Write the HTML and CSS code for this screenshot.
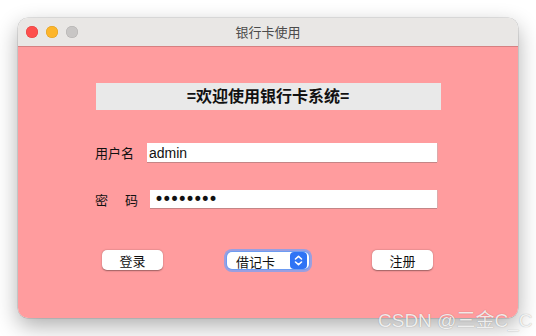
FILE: index.html
```html
<!DOCTYPE html>
<html lang="zh-CN">
<head>
    <meta charset="UTF-8">
    <title>银行卡使用</title>
    <link rel="stylesheet" href="styles.css">
</head>
<body>
<div class="window">
    <div class="titlebar">
        <div class="lights">
            <span class="close"></span>
            <span class="min"></span>
            <span class="max"></span>
        </div>
        <div class="title">银行卡使用</div>
    </div>
    <div class="content">
        <div class="banner">=欢迎使用银行卡系统=</div>
        <div class="row user">
            <span class="label">用户名</span>
            <input type="text" value="admin">
        </div>
        <div class="row pwd">
            <span class="label">密&emsp;码</span>
            <input type="password" value="12345678">
        </div>
        <div class="actions">
            <button class="btn">登录</button>
            <span class="select">
                <select>
                    <option>借记卡</option>
                    <option>信用卡</option>
                </select>
                <span class="stepper">
                    <svg width="17" height="17" viewBox="0 0 17 17">
                        <path d="M5.5 7 L8.5 4.3 L11.5 7 M5.5 10 L8.5 12.7 L11.5 10" fill="none" stroke="#fff" stroke-width="1.6" stroke-linecap="round" stroke-linejoin="round"/>
                    </svg>
                </span>
            </span>
            <button class="btn reg">注册</button>
        </div>
    </div>
</div>
<div class="mark">CSDN @三金C_C</div>
</body>
</html>
```

FILE: styles.css
```css
*{
    margin:0;
    padding:0;
    box-sizing:border-box;
}
html,body{
    width:536px;
    height:336px;
    overflow:hidden;
    background:#fff;
    font-family:"Liberation Sans","Noto Sans CJK SC",sans-serif;
}
.window{
    width:500px;
    height:300px;
    margin:18px 0 0 18px;
    border-radius:10px;
    overflow:hidden;
    box-shadow:0 8px 22px rgba(0,0,0,.32),0 0 0 .5px rgba(0,0,0,.18);
}
.titlebar{
    position:relative;
    height:29px;
    background-color:#e9e7e5;
    border-bottom:1px solid #d68081;
}
.lights{
    display:flex;
    gap:8px;
    padding:8px 0 0 8px;
}
.lights span{
    width:12px;
    height:12px;
    border-radius:50%;
}
.lights .close{
    background-color:#fe4f4d;
    box-shadow:inset 0 0 0 .5px #e0403e;
}
.lights .min{
    background-color:#fdb52a;
    box-shadow:inset 0 0 0 .5px #dc9d20;
}
.lights .max{
    background-color:#c8c6c5;
    box-shadow:inset 0 0 0 .5px #b1afae;
}
.title{
    position:absolute;
    left:0;
    right:0;
    top:0;
    line-height:28px;
    text-align:center;
    font-size:13px;
    color:#4b4b4b;
    font-family:"Noto Sans CJK SC",sans-serif;
}
.content{
    height:271px;
    padding-top:36px;
    background-color:#ff9c9e;
}
.banner{
    width:345px;
    height:27px;
    margin:0 auto;
    background-color:#e9e9e9;
    font-size:16px;
    font-weight:bold;
    line-height:27px;
    text-align:center;
    color:#111;
}
.row{
    display:flex;
    align-items:center;
    margin-left:77px;
    font-size:13px;
    color:#111;
}
.row .label{
    width:52px;
    font-family:"Noto Sans CJK SC",sans-serif;
}
.row input{
    border:0;
    outline:0;
    background:#fff;
    padding-left:2px;
    font-family:"Liberation Sans",sans-serif;
    font-size:14px;
    color:#111;
    box-shadow:0 1px 0 #c48586,1px 0 0 #dcaaab;
}
.user{
    margin-top:33px;
    height:19px;
}
.user input{
    width:290px;
    height:19px;
}
.pwd{
    margin-top:28px;
    height:18px;
}
.pwd .label{
    letter-spacing:2px;
}
.pwd input{
    width:287px;
    height:18px;
    margin-left:3px;
    padding-left:4px;
    font-family:"DejaVu Sans",sans-serif;
    font-size:17px;
    letter-spacing:-2.3px;
}
.actions{
    display:flex;
    align-items:center;
    height:22px;
    margin-top:41px;
    padding-left:84px;
}
.btn{
    width:61px;
    height:20px;
    border:0;
    border-radius:5px;
    background-color:#fff;
    box-shadow:0 .5px 1.5px rgba(0,0,0,.4);
    font-family:"Noto Sans CJK SC",sans-serif;
    font-size:13px;
    color:#111;
}
.select{
    position:relative;
    margin-left:64px;
    width:82px;
    height:17px;
    border-radius:5px;
    background:#fff;
    box-shadow:0 0 0 1px #6d9cf2,0 0 0 3px rgba(120,160,245,.75);
}
.select select{
    appearance:none;
    -webkit-appearance:none;
    width:100%;
    height:17px;
    border:0;
    outline:0;
    background:transparent;
    padding-left:9px;
    font-family:"Noto Sans CJK SC",sans-serif;
    font-size:13px;
    color:#111;
}
.stepper{
    position:absolute;
    right:2px;
    top:0;
    width:17px;
    height:17px;
    border-radius:4px;
    background-color:#2f74f5;
}
.stepper svg{
    display:block;
}
.reg{
    margin-left:63px;
}
.mark{
    position:absolute;
    left:378px;
    top:305px;
    font-size:19px;
    white-space:nowrap;
    color:rgba(255,255,255,.85);
    text-shadow:0 0 1px rgba(0,0,0,.35);
}
```
